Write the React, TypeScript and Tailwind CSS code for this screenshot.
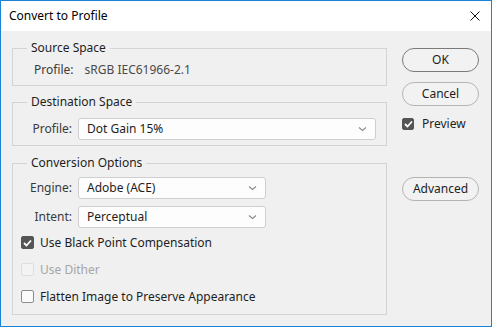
import React, { useState } from 'react';

const font = { fontFamily: '"Noto Sans", "Liberation Sans", sans-serif' };

const Chevron = () => (
  <svg width="9" height="6" viewBox="0 0 9 6" className="text-[#8a8a8a]">
    <path d="M1 1.5 L4.5 4.5 L8 1.5" fill="none" stroke="currentColor" strokeWidth="1.1" />
  </svg>
);

const Select = ({ value, width }: { value: string; width: string }) => (
  <div className={`${width} h-[22px] flex items-center justify-between pl-[8px] pr-[8px] bg-[#fdfdfd] border border-[#cfcfcf] rounded-[3px] text-[12px] text-[#1e1e1e]`}>
    <span>{value}</span>
    <Chevron />
  </div>
);

const Check = ({ checked, disabled, onClick, size = 13 }: { checked: boolean; disabled?: boolean; onClick?: () => void; size?: number }) => (
  <div
    onClick={disabled ? undefined : onClick}
    className={`shrink-0 rounded-[2px] flex items-center justify-center border ${
      checked
        ? 'bg-[#555555] border-[#555555]'
        : disabled
        ? 'bg-[#f3f3f3] border-[#dedede]'
        : 'bg-[#fbfbfb] border-[#8d8d8d]'
    }`}
    style={{ width: size, height: size }}
  >
    {checked && (
      <svg width="9" height="8" viewBox="0 0 9 8">
        <path d="M1 4 L3.5 6.5 L8 1.5" fill="none" stroke="white" strokeWidth="1.8" />
      </svg>
    )}
  </div>
);

const Group = ({ title, height, children }: { title: string; height: string; children: React.ReactNode }) => (
  <fieldset className={`${height} border border-[#d4d4d4] w-[375px]`}>
    <legend className="ml-[14px] px-[4px] text-[12px] leading-[16px] text-[#1e1e1e]">{title}</legend>
    {children}
  </fieldset>
);

const PillButton = ({ label, isDefault }: { label: string; isDefault?: boolean }) => (
  <button
    className={`w-[77px] h-[24px] rounded-full bg-[#f2f2f2] text-[12px] text-[#1e1e1e] border ${
      isDefault ? 'border-[#7a7a7a]' : 'border-[#b4b4b4]'
    }`}
  >
    {label}
  </button>
);

export default function App() {
  const [preview, setPreview] = useState(true);
  const [blackPoint, setBlackPoint] = useState(true);
  const [flatten, setFlatten] = useState(false);

  return (
    <div style={font} className="w-[492px] h-[327px] border border-[#1883d7] bg-[#f0f0f0] flex flex-col overflow-hidden">
      {/* Title bar */}
      <div className="h-[30px] bg-white flex items-center justify-between pl-[8px] pr-[11px]">
        <span className="text-[12px] text-black">Convert to Profile</span>
        <svg width="10" height="10" viewBox="0 0 10 10">
          <path d="M0.5 0.5 L9.5 9.5 M9.5 0.5 L0.5 9.5" stroke="#111" strokeWidth="1" />
        </svg>
      </div>

      <div className="flex pl-[11px] pt-[9px] gap-[15px]">
        {/* Left column */}
        <div className="flex flex-col">
          <Group title="Source Space" height="h-[46px]">
            <div className="flex items-center mt-[6px] pl-[21px] text-[12px] leading-[16px]">
              <span className="text-[#3a3a3a]">Profile:</span>
              <span className="ml-[11px] text-[#4a4a4a]">sRGB IEC61966-2.1</span>
            </div>
          </Group>

          <div className="h-[8px]" />

          <Group title="Destination Space" height="h-[52px]">
            <div className="flex items-center mt-[8px] text-[12px]">
              <span className="w-[59px] text-right text-[#3a3a3a]">Profile:</span>
              <div className="ml-[6px]">
                <Select value="Dot Gain 15%" width="w-[298px]" />
              </div>
            </div>
          </Group>

          <div className="h-[9px]" />

          <Group title="Conversion Options" height="h-[160px]">
            <div className="flex flex-col text-[12px]">
              <div className="flex items-center mt-[6px]">
                <span className="w-[59px] text-right text-[#3a3a3a]">Engine:</span>
                <div className="ml-[6px]">
                  <Select value="Adobe (ACE)" width="w-[188px]" />
                </div>
              </div>
              <div className="flex items-center mt-[7px]">
                <span className="w-[59px] text-right text-[#3a3a3a]">Intent:</span>
                <div className="ml-[6px]">
                  <Select value="Perceptual" width="w-[188px]" />
                </div>
              </div>

              <div className="flex flex-col pl-[8px] mt-[8px] gap-[14px]">
                <label className="flex items-center gap-[6px] h-[13px] text-[#1e1e1e]">
                  <Check checked={blackPoint} onClick={() => setBlackPoint(!blackPoint)} />
                  <span>Use Black Point Compensation</span>
                </label>
                <label className="flex items-center gap-[6px] h-[13px] text-[#a6a6a6]">
                  <Check checked={false} disabled />
                  <span>Use Dither</span>
                </label>
                <label className="flex items-center gap-[6px] h-[13px] text-[#1e1e1e]">
                  <Check checked={flatten} onClick={() => setFlatten(!flatten)} />
                  <span>Flatten Image to Preserve Appearance</span>
                </label>
              </div>
            </div>
          </Group>
        </div>

        {/* Right column */}
        <div className="flex flex-col pt-[8px]">
          <PillButton label="OK" isDefault />
          <div className="h-[10px]" />
          <PillButton label="Cancel" />
          <label className="flex items-center gap-[8px] mt-[10px] h-[16px] text-[12px] text-[#1e1e1e]">
            <Check checked={preview} onClick={() => setPreview(!preview)} size={12} />
            <span>Preview</span>
          </label>
          <div className="h-[45px]" />
          <PillButton label="Advanced" />
        </div>
      </div>
    </div>
  );
}
